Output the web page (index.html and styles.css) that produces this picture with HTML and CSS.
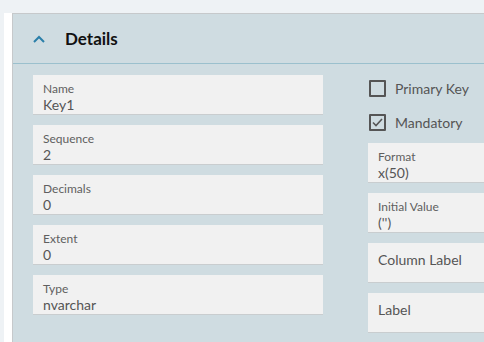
FILE: index.html
```
<!DOCTYPE html>
<html>
<head>
  <meta charset="utf-8" />
  <title>Details</title>
  <link rel="stylesheet" href="styles.css">
</head>
<body>
  <div id="shell">
    <div id="rail"></div>
    <div id="panel">
      <div class="panel-head">
        <svg class="chevron" width="14" height="8" viewBox="0 0 14 8">
          <path d="M2 7 L7 2 L12 7" fill="none" stroke="#2b7fa9" stroke-width="2" />
        </svg>
        <span class="title">Details</span>
      </div>

      <div class="panel-body">
        <div class="col-left">
          <div class="field"><div class="label">Name</div><div class="value">Key1</div></div>
          <div class="field"><div class="label">Sequence</div><div class="value">2</div></div>
          <div class="field"><div class="label">Decimals</div><div class="value">0</div></div>
          <div class="field"><div class="label">Extent</div><div class="value">0</div></div>
          <div class="field"><div class="label">Type</div><div class="value">nvarchar</div></div>
        </div>

        <div class="col-right">
          <label class="check">
            <span class="box"></span>
            Primary Key
          </label>
          <label class="check">
            <span class="box">
              <svg width="13" height="13" viewBox="0 0 13 13">
                <path d="M2 6.5 L5 9.5 L11 3" fill="none" stroke="#555" stroke-width="1.6" />
              </svg>
            </span>
            Mandatory
          </label>
          <div class="field"><div class="label">Format</div><div class="value">x(50)</div></div>
          <div class="field"><div class="label">Initial Value</div><div class="value">('')</div></div>
          <div class="field empty"><div class="placeholder">Column Label</div></div>
          <div class="field empty"><div class="placeholder">Label</div></div>
        </div>
      </div>
    </div>
  </div>
</body>
</html>
```

FILE: styles.css
```
* {
  margin: 0;
  padding: 0;
  box-sizing: border-box;
  font-family: 'Lato', sans-serif;
}

body {
  background-color: #eef2f5;
  width: 484px;
  height: 342px;
  overflow: hidden;
}

#shell {
  display: flex;
  padding-top: 13px;
  padding-left: 4px;
  height: 100%;
}

#rail {
  width: 8px;
  flex-shrink: 0;
  background-color: #ffffff;
}

#panel {
  flex: 1;
  background-color: #cfdce1;
  border-top: 1px solid #c6c9cb;
  border-left: 1px solid #c6c9cb;
  min-width: 0;
  overflow: hidden;
}

.panel-head {
  height: 50px;
  display: flex;
  align-items: center;
  padding-left: 19px;
  border-bottom: 1px solid #9bc0cd;
}

.chevron {
  margin-right: 19px;
}

.title {
  font-size: 17px;
  font-weight: bold;
  color: #111;
}

.panel-body {
  display: flex;
  gap: 45px;
  padding: 11px 0 0 20px;
}

.col-left {
  width: 290px;
  flex-shrink: 0;
  display: flex;
  flex-direction: column;
  gap: 10px;
}

.col-right {
  width: 290px;
  flex-shrink: 0;
  display: flex;
  flex-direction: column;
}

.field {
  height: 40px;
  background-color: #f1f1f1;
  border-bottom: 1px solid #c9cdcf;
  padding: 6px 10px 0;
}

.col-right .field {
  margin-bottom: 10px;
}

.label {
  font-size: 12px;
  color: #5f5f5f;
  line-height: 15px;
}

.value {
  font-size: 14px;
  color: #555;
  line-height: 18px;
}

.placeholder {
  font-size: 14px;
  color: #555;
  line-height: 22px;
}

.check {
  display: flex;
  align-items: center;
  gap: 9px;
  height: 17px;
  font-size: 14px;
  color: #555;
  margin-top: 5px;
  padding-left: 1px;
}

.check + .check {
  margin-top: 17px;
  margin-bottom: 12px;
}

.box {
  width: 17px;
  height: 17px;
  border: 2px solid #555;
  border-radius: 1px;
  display: flex;
  align-items: center;
  justify-content: center;
}
```
